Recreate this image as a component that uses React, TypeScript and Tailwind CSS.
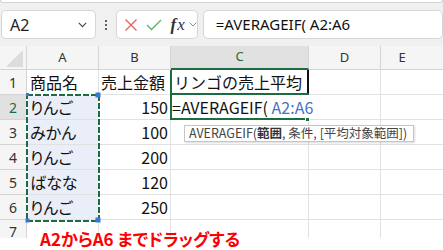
import React from "react";

const CJK = "font-['Noto_Sans_CJK_JP','Noto_Sans',sans-serif]";
const UI = "font-['Noto_Sans','Noto_Sans_CJK_JP',sans-serif]";

function Cell({
  w,
  children,
  className = "",
}: {
  w: string;
  children?: React.ReactNode;
  className?: string;
}) {
  return (
    <div
      className={`${w} shrink-0 h-full border-r border-b border-[#e1e1e1] flex items-center overflow-visible whitespace-nowrap ${className}`}
    >
      {children}
    </div>
  );
}

const rows: { n: number; a: string; b: string }[] = [
  { n: 1, a: "商品名", b: "売上金額" },
  { n: 2, a: "りんご", b: "150" },
  { n: 3, a: "みかん", b: "100" },
  { n: 4, a: "りんご", b: "200" },
  { n: 5, a: "ばなな", b: "120" },
  { n: 6, a: "りんご", b: "250" },
];

export default function App() {
  return (
    <div className="relative w-[443px] h-[250px] overflow-hidden bg-white">
      {/* top toolbar */}
      <div className="h-[46px] bg-[#f0f0f0] flex flex-col">
        <div className="h-[3px] bg-white border-b border-[#d4d4d4] rounded-b-[4px] border-x" />
        <div className="flex items-center mt-[7px] h-[29px]">
          <div className="ml-[1px] w-[102px] h-[29px] bg-white border border-[#d6d6d6] rounded-[5px] flex items-center pl-[8px] pr-[8px] justify-between">
            <span className={`${UI} text-[16px] text-[#222] leading-none`}>A2</span>
            <svg width="9" height="6" viewBox="0 0 9 6">
              <path d="M0.8 0.8 L4.5 4.6 L8.2 0.8" fill="none" stroke="#444" strokeWidth="1.1" />
            </svg>
          </div>
          <div className="w-[21px] h-full flex flex-col items-center justify-center gap-[2px]">
            <span className="w-[2px] h-[2px] bg-[#333] rounded-full" />
            <span className="w-[2px] h-[2px] bg-[#333] rounded-full" />
            <span className="w-[2px] h-[2px] bg-[#333] rounded-full" />
          </div>
          <div className="w-[85px] h-[29px] bg-white border border-[#d6d6d6] rounded-[5px] flex items-center pl-[7px]">
            <svg width="14" height="14" viewBox="0 0 14 14">
              <path d="M1.5 1.5 L12.5 12.5 M12.5 1.5 L1.5 12.5" stroke="#e2625e" strokeWidth="1.3" fill="none" />
            </svg>
            <svg width="16" height="12" viewBox="0 0 16 12" className="ml-[8px]">
              <path d="M1 6 L5.5 10.5 L15 1" stroke="#5aaf6a" strokeWidth="1.3" fill="none" />
            </svg>
            <span className="ml-[9px] font-['Liberation_Serif',serif] italic text-[17px] text-[#333] leading-none tracking-[1px]">
              <span className="font-bold">f</span>x
            </span>
            <svg width="8" height="5" viewBox="0 0 8 5" className="ml-[3px]">
              <path d="M0.6 0.6 L4 4 L7.4 0.6" fill="none" stroke="#888" strokeWidth="1" />
            </svg>
          </div>
          <div className="ml-[5px] w-[260px] h-[29px] bg-white border border-[#d6d6d6] rounded-[5px] flex items-center pl-[12px]">
            <span className={`${UI} text-[15px] text-[#111] whitespace-pre`}>=AVERAGEIF( A2:A6</span>
          </div>
        </div>
      </div>

      {/* column headers */}
      <div className={`flex h-[24px] bg-[#f5f5f5] ${UI} text-[13px] text-[#333]`}>
        <div className="w-[27px] shrink-0 h-full border-r border-b border-[#d4d4d4] relative">
          <div className="absolute right-[3px] bottom-[2px] w-0 h-0 border-l-[17px] border-l-transparent border-b-[17px] border-b-[#dcdcdc]" />
        </div>
        <div className="w-[72px] shrink-0 border-r border-b border-[#d4d4d4] flex items-center justify-center">A</div>
        <div className="w-[72px] shrink-0 border-r border-b border-[#d4d4d4] flex items-center justify-center">B</div>
        <div className="w-[138px] shrink-0 border-r border-[#d4d4d4] border-b-2 border-b-[#1d6b41] bg-[#e1e1e1] text-[#1d6b41] flex items-center justify-center">C</div>
        <div className="w-[72px] shrink-0 border-r border-b border-[#d4d4d4] flex items-center justify-center">D</div>
        <div className="flex-1 border-b border-[#d4d4d4] flex items-center justify-center pr-[20px]">E</div>
      </div>

      {/* rows */}
      {rows.map((r) => (
        <div key={r.n} className={`flex h-[25px] ${CJK} text-[16px] text-[#111]`}>
          <div
            className={`w-[27px] shrink-0 h-full border-r border-b border-[#d4d4d4] flex items-center justify-center ${UI} text-[14px] ${
              r.n === 2 ? "bg-[#e1e1e1] text-[#1d6b41]" : "bg-[#f5f5f5] text-[#333]"
            }`}
          >
            {r.n}
          </div>
          <Cell w="w-[72px]" className={`pl-[3px] [font-feature-settings:'palt'] ${r.n >= 2 ? "bg-[#e9eef8]" : ""}`}>
            {r.a}
          </Cell>
          <Cell w="w-[72px]" className={r.n === 1 ? "pl-[2px]" : "justify-end pr-[2px]"}>
            {r.b}
          </Cell>
          <Cell w="w-[138px]" className="pl-[3px]">
            {r.n === 1 ? "リンゴの売上平均" : ""}
          </Cell>
          <Cell w="w-[72px]" />
          <div className="flex-1 h-full border-b border-[#e1e1e1]" />
        </div>
      ))}
      <div className="flex h-[18px]">
        <div className={`w-[27px] shrink-0 h-full border-r border-[#d4d4d4] bg-[#f5f5f5] flex items-start pt-[1px] justify-center ${UI} text-[14px] text-[#333]`}>
          7
        </div>
        <div className="w-[72px] shrink-0 h-full border-r border-[#e1e1e1]" />
        <div className="w-[72px] shrink-0 h-full border-r border-[#e1e1e1]" />
        <div className="w-[138px] shrink-0 h-full border-r border-[#e1e1e1]" />
        <div className="w-[72px] shrink-0 h-full border-r border-[#e1e1e1]" />
      </div>

      {/* C1 borders */}
      <div className="absolute left-[170px] top-[70px] w-[2px] h-[25px] bg-[#1d6b41]" />
      <div className="absolute left-[307px] top-[70px] w-[2px] h-[25px] bg-[#111]" />

      {/* C2 active editing cell */}
      <div className="absolute left-[170px] top-[93px] w-[139px] h-[27px] border-2 border-[#1d6b41] bg-white" />
      <div className={`absolute left-[172px] top-[95px] h-[23px] bg-white flex items-center pr-[2px] ${CJK} text-[16px] whitespace-pre`}>
        <span className="text-[#111]">=AVERAGEIF(</span>
        <span className="text-[#4472c4]"> A2:A6</span>
      </div>
      <div className="absolute left-[305px] top-[117px] w-[5px] h-[5px] bg-[#1d6b41] border border-white" />

      {/* dashed range selection A2:A6 */}
      <svg className="absolute left-[25px] top-[92px]" width="78" height="132" viewBox="0 0 78 132">
        <rect x="2" y="3" width="72" height="126" fill="none" stroke="#ffffff" strokeWidth="2" />
        <rect x="2" y="3" width="72" height="126" fill="none" stroke="#1d6b41" strokeWidth="2" strokeDasharray="6 2" />
        <rect x="70.5" y="0.5" width="5" height="5" fill="#3a78d0" />
        <rect x="0.5" y="126.5" width="4" height="4" fill="#3a78d0" />
        <rect x="70.5" y="125.5" width="5" height="5" fill="#3a78d0" />
        <rect x="1" y="1" width="3" height="3" fill="#3a78d0" />
      </svg>

      {/* tooltip */}
      <div className={`absolute left-[184px] top-[125px] w-[230px] h-[17px] bg-white border border-[#c6c6c6] shadow-[1px_1px_2px_rgba(0,0,0,0.15)] flex items-center pl-[4px] ${CJK} text-[12.5px] text-[#444] whitespace-nowrap`}>
        AVERAGEIF(<span className="font-bold text-[#333]">範囲</span>, 条件, [平均対象範囲])
      </div>

      {/* annotation */}
      <div className={`absolute left-[40px] top-[228px] ${CJK} font-bold text-[17px] leading-[22px] text-[#ff0000] whitespace-pre [font-feature-settings:'palt']`}>
        A2からA6 までドラッグする
      </div>
    </div>
  );
}
